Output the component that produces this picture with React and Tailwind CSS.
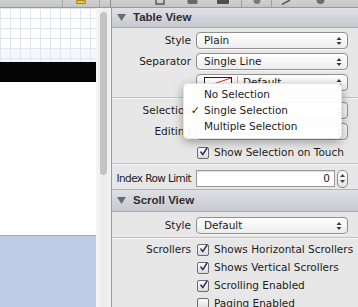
import React from 'react';

const Arrows = () => (
  <svg width="6" height="10" viewBox="0 0 6 10" className="shrink-0">
    <path d="M0.5 4 L3 1 L5.5 4 Z" fill="#3a3a3a" />
    <path d="M0.5 6 L3 9 L5.5 6 Z" fill="#3a3a3a" />
  </svg>
);

const Popup = ({ children }) => (
  <div className="h-[17px] w-[152px] rounded-[4px] border border-[#8f8f8f] bg-gradient-to-b from-white to-[#ededed] flex items-center pl-[7px] pr-[5px] shadow-[0_1px_0_rgba(255,255,255,0.7)]">
    <div className="flex-1 flex items-center whitespace-nowrap overflow-hidden">{children}</div>
    <Arrows />
  </div>
);

const Check = ({ checked = true }) => (
  <div className="w-[12px] h-[12px] ml-[1px] shrink-0 rounded-[2px] border border-[#6c6c6c] bg-gradient-to-b from-white to-[#d9d9d9] flex items-center justify-center">
    {checked && (
      <svg width="12" height="12" viewBox="0 0 12 12" className="-mt-[2px] ml-[1px]">
        <path d="M2.5 6 L5 9.5 L10.5 1" stroke="#22345c" strokeWidth="2" fill="none" strokeLinecap="round" strokeLinejoin="round" />
      </svg>
    )}
  </div>
);

const Row = ({ label, h = 'h-[21px]', children }) => (
  <div className={`flex items-center ${h}`}>
    <div className="w-[79px] shrink-0 text-right whitespace-nowrap">{label}</div>
    <div className="ml-[5px] flex items-center">{children}</div>
  </div>
);

const CheckRow = ({ label, text, checked }) => (
  <Row label={label} h="h-[18px]">
    <Check checked={checked} />
    <span className="ml-[5px] whitespace-nowrap">{text}</span>
  </Row>
);

const Header = ({ title, h = 'h-[20px]' }) => (
  <div className={`${h} flex items-center bg-gradient-to-b from-[#e0e0e6] to-[#c8c8d0] border-b border-[#a8a8b0]`}>
    <svg width="9" height="7" viewBox="0 0 9 7" className="ml-[5px]">
      <path d="M0 0 H9 L4.5 7 Z" fill="#6a6a70" />
    </svg>
    <span className="ml-[7px] font-['Liberation_Sans',sans-serif] font-bold text-[11.5px] text-[#2e2e2e]">{title}</span>
  </div>
);

const Line = () => <div className="h-[2px] border-t border-[#c2c2c2] border-b border-b-[#f4f4f4]" />;

const ToolIcon = ({ w, children }) => (
  <div className={`${w} flex justify-center items-start`}>{children}</div>
);

const Toolbar = () => (
  <div className="h-[8px] shrink-0 flex border-b border-[#9a9a9a] bg-gradient-to-b from-[#d2d2d2] to-[#c4c4c4]">
    <div className="w-[63px] border-r border-[#a6a6a6]" />
    <div className="w-[37px] flex justify-center border-r border-[#a6a6a6]">
      <div className="w-[10px] h-[4px] bg-[#e8c93a] border border-[#a88a1a] rounded-b-[1px]" />
    </div>
    <div className="w-[11px] border-r border-[#8e8e8e]" />
    <ToolIcon w="w-[34px]" />
    <ToolIcon w="w-[30px]">
      <svg width="10" height="5" viewBox="0 0 10 5"><path d="M1 0 V4 H9 V0" stroke="#555" strokeWidth="1.4" fill="none" /></svg>
    </ToolIcon>
    <ToolIcon w="w-[34px]">
      <svg width="11" height="5" viewBox="0 0 11 5"><rect x="0.5" y="-2" width="10" height="6" rx="1.5" fill="#6a6a6a" /></svg>
    </ToolIcon>
    <ToolIcon w="w-[28px]">
      <svg width="12" height="5" viewBox="0 0 12 5"><rect x="0" y="-2" width="12" height="6" rx="1" fill="#505050" /></svg>
    </ToolIcon>
    <div className="w-[5px] border-r border-[#9e9e9e]" />
    <ToolIcon w="w-[29px]">
      <svg width="8" height="5" viewBox="0 0 8 5"><circle cx="4" cy="0.5" r="3.5" fill="#7a7a7a" /></svg>
    </ToolIcon>
    <div className="w-[1px] bg-[#9e9e9e]" />
    <ToolIcon w="w-[27px]">
      <svg width="10" height="5" viewBox="0 0 10 5"><path d="M1 4.5 L9 0" stroke="#5a5a5a" strokeWidth="1.5" /></svg>
    </ToolIcon>
    <ToolIcon w="w-[43px]">
      <svg width="9" height="5" viewBox="0 0 9 5"><circle cx="4.5" cy="0" r="4" fill="#6e6e6e" /></svg>
    </ToolIcon>
  </div>
);

const Canvas = () => (
  <div className="w-[96px] flex flex-col shrink-0">
    <div className="h-[54px] shrink-0 bg-white bg-[image:linear-gradient(to_right,#e0e3ea_1px,transparent_1px),linear-gradient(to_bottom,#e0e3ea_1px,transparent_1px)] bg-[size:10px_10px]">
      <div className="h-[40px]" />
      <div className="h-[14px] bg-[#e8ebf6]/40" />
    </div>
    <div className="h-[20px] shrink-0 bg-[#050505]" />
    <div className="h-[154px] shrink-0 bg-white border-b border-[#9eaac0]" />
    <div className="flex-1 bg-[#bfcce5]" />
  </div>
);

const Scrollbar = () => (
  <div className="w-[15px] shrink-0 bg-gradient-to-r from-[#f6f6f6] via-[#ececec] to-[#f3f3f3] pt-[4px]">
    <div className="ml-[4px] w-[7px] h-[163px] rounded-full bg-[#c3c3c3]" />
  </div>
);

export default function App() {
  return (
    <div className="relative w-[358px] h-[307px] overflow-hidden flex flex-col bg-[#e7e7e7] font-['DejaVu_Sans',sans-serif] text-[10.5px] text-[#1c1c1c]">
      <Toolbar />
      <div className="flex flex-1 min-h-0">
        <Canvas />
        <Scrollbar />
        <div className="flex-1 min-w-0 border-l border-[#9c9c9c] overflow-hidden">
          <Header title="Table View" />
          <div className="pt-[2px] pb-[4px]">
            <Row label="Style"><Popup>Plain</Popup></Row>
            <Row label="Separator"><Popup>Single Line</Popup></Row>
            <Row label="">
              <Popup>
                <div className="w-[28px] h-[11px] border border-[#222] bg-white shrink-0">
                  <svg width="26" height="9" viewBox="0 0 26 9">
                    <path d="M0 9 L26 0" stroke="#d23030" strokeWidth="1" />
                  </svg>
                </div>
                <div className="w-[1px] h-[13px] bg-[#b2b2b2] mx-[5px]" />
                <span>Default</span>
              </Popup>
            </Row>
          </div>
          <Line />
          <div className="pt-[1px]">
            {/* popups covered by the open menu */}
            <Row label="Selection"><Popup /></Row>
            <Row label="Editing"><Popup /></Row>
            <Row label="">
              <Check />
              <span className="ml-[5px] whitespace-nowrap">Show Selection on Touch</span>
            </Row>
          </div>
          <Line />
          <div className="pt-[3px]">
            <Row label={<span className="tracking-[-0.6px]">Index Row Limit</span>}>
              <div className="w-[139px] h-[17px] border border-[#9a9a9a] bg-white shadow-[inset_0_1px_1px_rgba(0,0,0,0.15)] flex items-center justify-end pr-[4px]">0</div>
              <div className="ml-[2px] w-[11px] h-[18px] rounded-[5px] border border-[#8a8a8a] bg-gradient-to-b from-white to-[#e4e4e4] flex flex-col items-center justify-center gap-[3px]">
                <svg width="5" height="3" viewBox="0 0 5 3"><path d="M0 3 L2.5 0 L5 3 Z" fill="#444" /></svg>
                <svg width="5" height="3" viewBox="0 0 5 3"><path d="M0 0 L2.5 3 L5 0 Z" fill="#444" /></svg>
              </div>
            </Row>
          </div>
          <div className="border-t border-[#b4b4b4]" />
          <Header title="Scroll View" h="h-[22px]" />
          <div className="pt-[3px] pb-[1px]">
            <Row label="Style"><Popup>Default</Popup></Row>
          </div>
          <Line />
          <div className="pt-[2px]">
            <CheckRow label="Scrollers" text="Shows Horizontal Scrollers" checked />
            <CheckRow label="" text="Shows Vertical Scrollers" checked />
            <CheckRow label="" text="Scrolling Enabled" checked />
            <CheckRow label="" text="Paging Enabled" checked={false} />
          </div>
        </div>
      </div>

      {/* open Selection menu */}
      <div className="absolute left-[183px] top-[83px] w-[159px] h-[56px] rounded-[5px] bg-white/95 border border-black/10 shadow-[0_3px_10px_rgba(0,0,0,0.35)] pt-[3px]">
        {['No Selection', 'Single Selection', 'Multiple Selection'].map((t, i) => (
          <div key={t} className="h-[16px] flex items-center">
            <span className="w-[20px] text-right pr-[4px] text-[11px]">{i === 1 ? '✓' : ''}</span>
            <span className="whitespace-nowrap">{t}</span>
          </div>
        ))}
      </div>
    </div>
  );
}
